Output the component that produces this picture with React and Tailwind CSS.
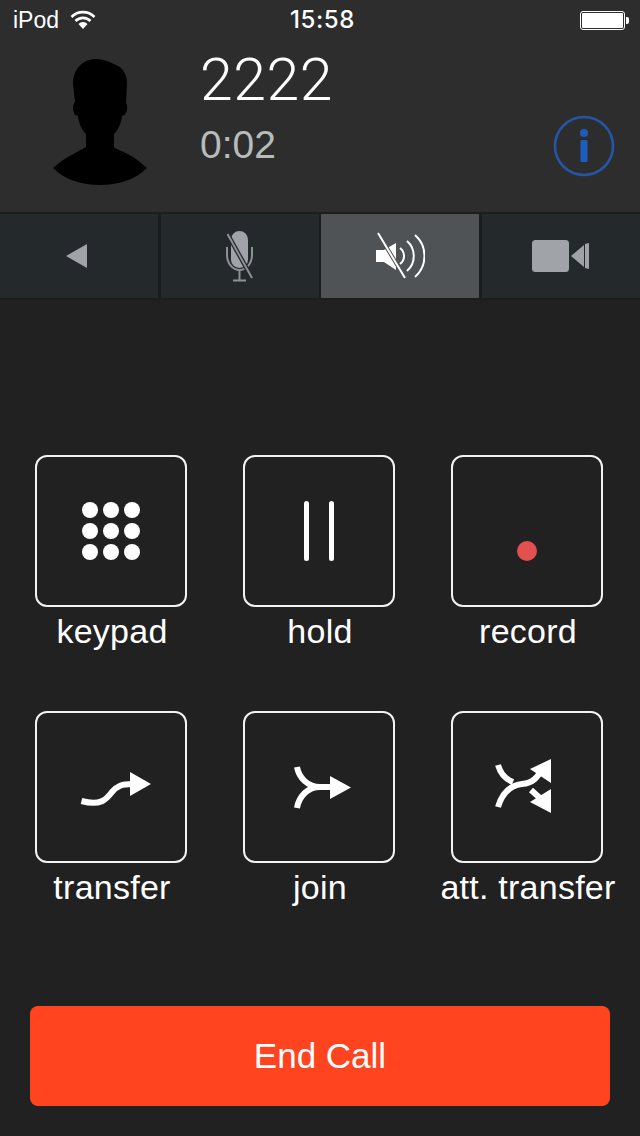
function Box({ label, vb, children }) {
  return (
    <div className="flex w-[152px] flex-col items-center">
      <div className="flex h-[152px] w-[152px] items-center justify-center rounded-[12px] border-2 border-[#f2f2f2]">
        <svg width="148" height="148" viewBox={vb} className="block">{children}</svg>
      </div>
      <div className="h-[48px] whitespace-nowrap pl-[2px] text-[34px] leading-[48px] tracking-[0.25px] text-white">{label}</div>
    </div>
  );
}
function Cell({ w, active, children, className = "" }) {
  return <div className={`flex items-center justify-center ${w} ${active ? "bg-[#4f5356]" : "bg-[#24292c]"} ${className}`}>{children}</div>;
}
export default function App() {
  return (
    <div className="flex h-[1136px] w-[640px] flex-col overflow-hidden bg-[#212121] font-['Liberation_Sans',sans-serif]">
      <header className="h-[212px] bg-[#2d2d2d]">
        <div className="flex h-[40px] items-center justify-between pl-[13px] pr-[11px] text-white">
          <div className="flex w-[200px] items-center">
            <span className="text-[23px] leading-[40px]">iPod</span>
            <svg width="26" height="20" viewBox="0 0 26 20" className="ml-[11px]">
              <path d="M1.5 7 A16 16 0 0 1 24.5 7 M5.5 11 A10.5 10.5 0 0 1 20.5 11" fill="none" stroke="#fff" strokeWidth="2.6" />
              <path d="M8.5 14 A6 6 0 0 1 17.5 14 L13 19 Z" fill="#fff" />
            </svg>
          </div>
          <span className="pl-[3px] font-['Inter',sans-serif] text-[24px] font-medium leading-[40px] tracking-[0.6px]">15:58</span>
          <div className="flex w-[200px] items-center justify-end">
            <div className="h-[19px] w-[45px] rounded-[3px] border border-white p-[1px]"><div className="h-full w-full rounded-[1px] bg-white" /></div>
            <div className="ml-[1px] h-[7px] w-[3px] rounded-r-[2px] bg-white" />
          </div>
        </div>
        <div className="flex h-[172px] pl-[50px]">
          <svg width="100" height="135" viewBox="50 55 100 135" className="mt-[15px] block">
            <path fill="#000" d="M96 59 C105 59 112 63 118 66 C124 69 127 76 127 84 L126 103 C127 104 127.5 107 127 110 C126.5 113 124 116 122 116 C121 124 118 130 114 134 L114 147 C118 151 130 152 147 168 C135 180 118 185 100 185 C82 185 65 180 53 168 C65 157 78 152 86 147 L86 134 C82 130 79 124 78 116 C75 116 73 112 73 108 C73 105 74 103 75 102 L73 84 C73 69 83 59 96 59 Z" />
          </svg>
          <div className="ml-[50px] flex w-[353px] flex-col">
            <div className="mt-[6px] h-[68px] font-['Roboto',sans-serif] text-[59px] font-light leading-[68px] tracking-[0.5px] text-white">2222</div>
            <div className="mt-[9px] h-[44px] text-[39px] leading-[44px] text-[#b6bcbc]">0:02</div>
          </div>
          <svg width="62" height="62" viewBox="553 115 62 62" className="mt-[75px] block">
            <circle cx="584" cy="146" r="29" fill="none" stroke="#2456a6" strokeWidth="2.6" />
            <circle cx="584" cy="133" r="4" fill="#1c5dbe" />
            <rect x="580.5" y="140" width="7" height="22" rx="1" fill="#1c5dbe" />
          </svg>
        </div>
      </header>

      <nav className="flex h-[88px] border-y-2 border-[#1b1e1f] bg-[#1b1e1f]">
        <Cell w="w-[158px]">
          <svg width="21" height="24" viewBox="66 244 21 24" className="mr-[5px]"><path d="M66 256 L87 244 L87 268 Z" fill="#a0a3a7" /></svg>
        </Cell>
        <Cell w="w-[158px]" className="ml-[3px]">
          <svg width="30" height="52" viewBox="225 230 30 52">
            <rect x="231" y="231" width="17" height="37" rx="8.5" fill="#a0a3a7" />
            <path d="M227 247 V255 A12.5 15 0 0 0 252 255 V247 M239.5 270 V280 M233 280.5 H246" fill="none" stroke="#8d9094" strokeWidth="2" />
            <path d="M227.5 234 L252 278" stroke="#24292c" strokeWidth="4.5" />
            <path d="M227.5 234 L252 278" stroke="#8d9094" strokeWidth="2" />
          </svg>
        </Cell>
        <Cell w="w-[158px]" active className="ml-[2px]">
          <svg width="50" height="48" viewBox="375 232 50 48">
            <path d="M376 250 H384 L396 243 V270 L384 262 H376 Z" fill="#fff" />
            <path d="M400 248 A10 10 0 0 1 400 264 M407 241 A20 20 0 0 1 407 271 M415 235 A28 28 0 0 1 415 277" fill="none" stroke="#fff" strokeWidth="2" />
            <path d="M378 233 L405 278" stroke="#4f5356" strokeWidth="4" />
            <path d="M378 233 L405 278" stroke="#fff" strokeWidth="2" />
          </svg>
        </Cell>
        <Cell w="w-[158px]" className="ml-[3px]">
          <svg width="58" height="33" viewBox="532 240 58 33">
            <rect x="532" y="240" width="37" height="32" rx="3.5" fill="#a0a3a7" />
            <path d="M571 256 L584 245 V267 Z" fill="#a0a3a7" />
            <path d="M585 244 L589 243 V269 L585 268 Z" fill="#a0a3a7" />
          </svg>
        </Cell>
      </nav>

      <main className="flex flex-1 flex-col pt-[155px]">
        <div className="grid grid-cols-[152px_152px_152px] gap-x-[56px] gap-y-[56px] pl-[35px]">
          <Box label="keypad" vb="37 457 148 148">
            {[510, 531, 552].map((y) => [90, 111, 132].map((x) => <circle key={`${x}-${y}`} cx={x} cy={y} r="8" fill="#fff" />))}
          </Box>
          <Box label="hold" vb="245 457 148 148">
            <rect x="304" y="501" width="5" height="60" rx="2.5" fill="#fff" />
            <rect x="329" y="501" width="5" height="60" rx="2.5" fill="#fff" />
          </Box>
          <Box label="record" vb="453 457 148 148">
            <circle cx="527" cy="551" r="10" fill="#e25050" />
          </Box>
          <Box label="transfer" vb="37 713 148 148">
            <path d="M81.5 801 C100 806 106 800 112 792 C117 786 122 784 132 784" fill="none" stroke="#fff" strokeWidth="6" />
            <path d="M130 772 L151 784 L130 796 Z" fill="#fff" />
          </Box>
          <Box label="join" vb="245 713 148 148">
            <path d="M297 767 C299 778 308 787 320 787 C308 787 299 796 297 808 M320 787 H332" fill="none" stroke="#fff" strokeWidth="6" />
            <path d="M330 776 L351 787.5 L330 799 Z" fill="#fff" />
          </Box>
          <Box label="att. transfer" vb="453 713 148 148">
            <path d="M498 765 C500 772 505 779 513 782 M531 790 L541 799" fill="none" stroke="#fff" strokeWidth="6" />
            <path d="M498 807 C503 790 513 785 522 784 C533 783 537 778 543 768" fill="none" stroke="#fff" strokeWidth="6" />
            <path d="M551 759 L530 769 L551 783 Z M551 813 L530 802 L551 789 Z" fill="#fff" />
          </Box>
        </div>
        <div className="mx-[30px] mt-[95px] flex h-[100px] items-center justify-center rounded-[8px] bg-[#ff441f] text-[35px] text-white">End Call</div>
      </main>
    </div>
  );
}
